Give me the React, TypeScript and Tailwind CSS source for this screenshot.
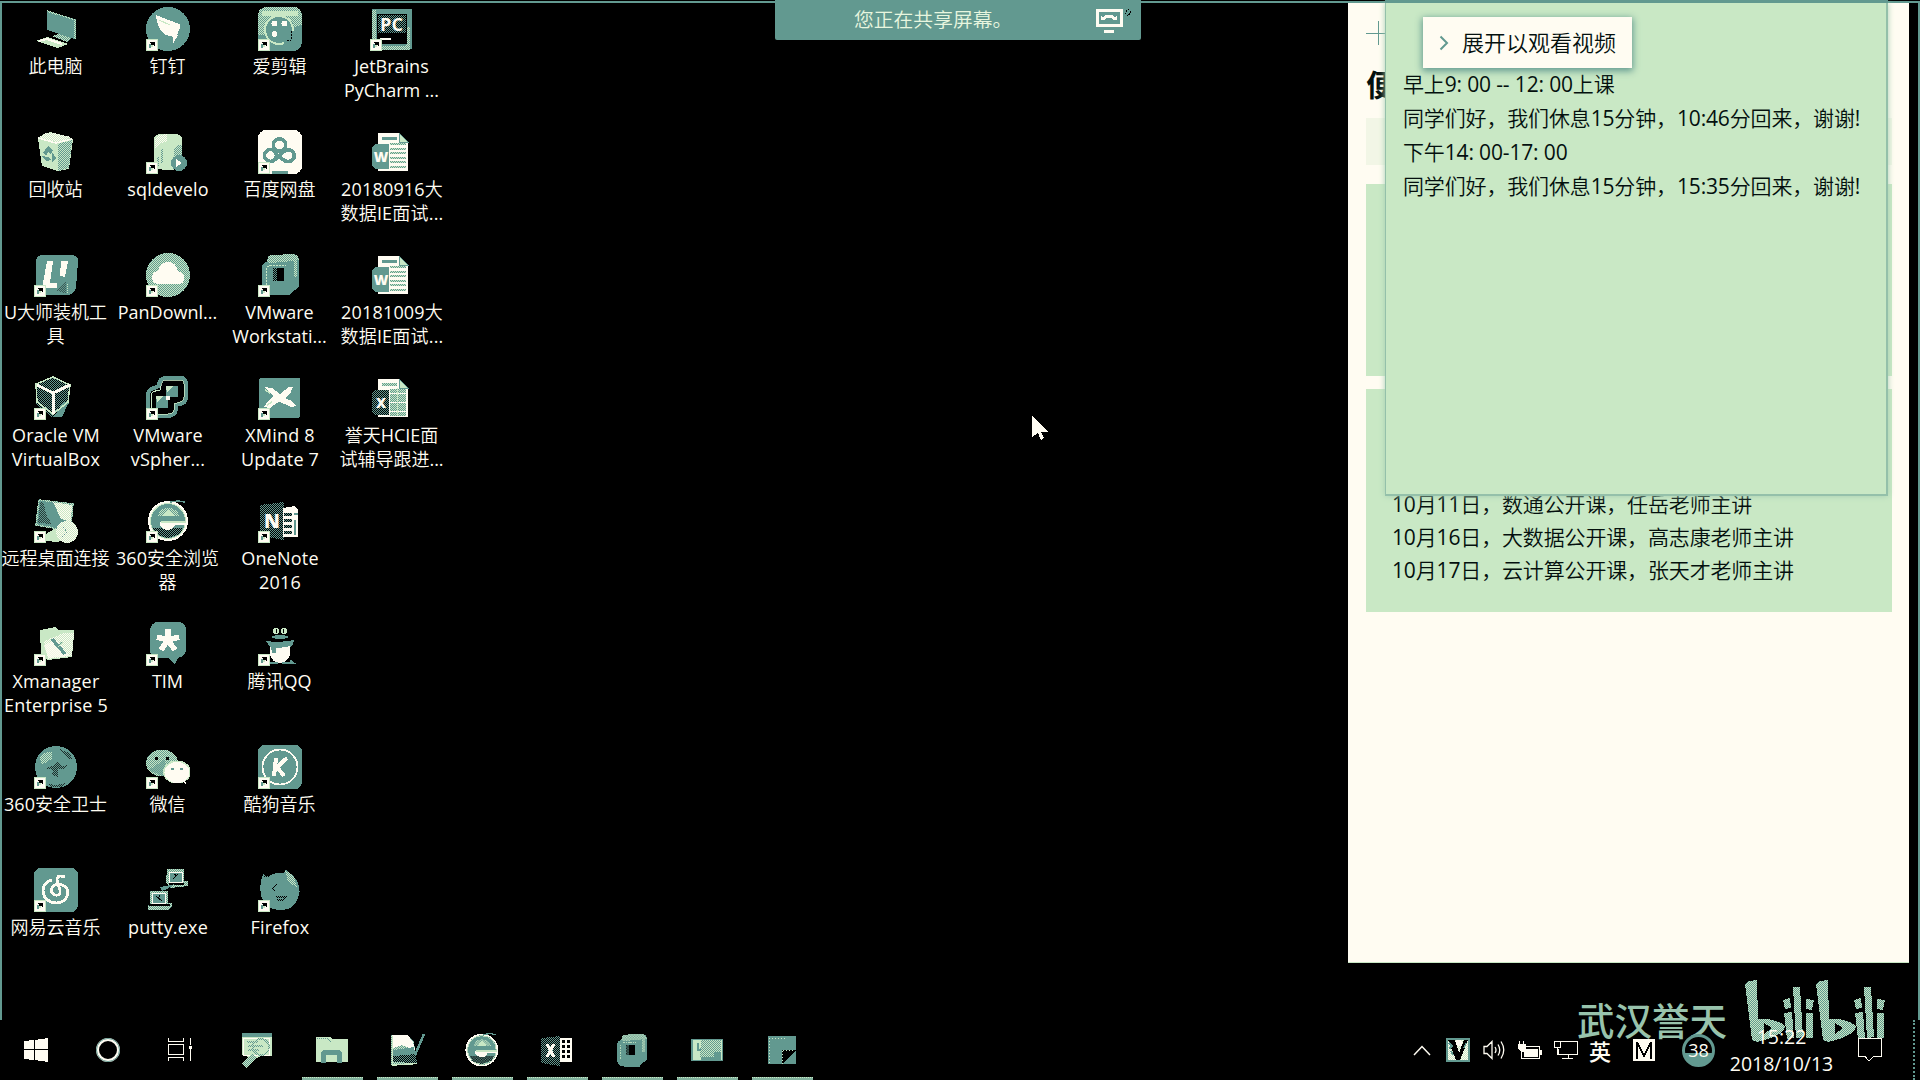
import React from "react";

const T = "#629990";
const G = "#c9e8c5";
const C = "#fffcf2";
const K = "#000000";
const TG = "url(#mix-tg)";
const TK = "url(#mix-tk)";
const GC = "url(#mix-gc)";

function Patterns() {
  const mix = (id: string, a: string, b: string) => (
    <pattern id={id} width="2" height="2" patternUnits="userSpaceOnUse">
      <rect width="2" height="2" fill={a} />
      <rect width="1" height="1" fill={b} />
      <rect x="1" y="1" width="1" height="1" fill={b} />
    </pattern>
  );
  return (
    <svg className="absolute h-0 w-0" aria-hidden="true">
      <defs>
        {mix("mix-tg", T, G)}
        {mix("mix-tk", T, K)}
        {mix("mix-gc", G, C)}
      </defs>
    </svg>
  );
}

function Badge() {
  return (
    <g>
      <rect y="32" width="12" height="12" fill={C} />
      <rect x="0.5" y="32.5" width="11" height="11" fill="none" stroke={G} />
      <path d="M4 41 V38 L7.5 36" stroke={T} strokeWidth="2" fill="none" />
      <path d="M4 35 H9 V40 L7 38 L5 40 V37 Z" fill={K} />
      <rect x="5" y="38" width="2" height="2" fill={G} />
    </g>
  );
}

function Doc({ letter, sheet }: { letter: string; sheet?: boolean }) {
  return (
    <g>
      <path d="M8 3 H29 L38 12 V41 H8 Z" fill={C} />
      <path d="M29 3 L38 12 H29 Z" fill={G} stroke={T} strokeWidth="1" />
      <rect x="12" y="7" width="15" height="3" fill={sheet ? TG : T} />
      {[13, 18, 22, 27, 31, 36].map((y) => (
        <rect key={y} x="20" y={y} width="16" height={sheet ? 4 : 2} fill={TG} />
      ))}
      {sheet && <path d="M27.500 12 V40" stroke={G} />}
      <path d="M2 17 L5 14 H19 V39 H5 L2 36 Z" fill={sheet ? TK : T} />
      <text x="11" y="32" textAnchor="middle" fontFamily="Open Sans, sans-serif" fontWeight="800" fontSize="14" fill={C}>
        {letter}
      </text>
    </g>
  );
}

function VmSquares() {
  return (
    <g>
      <path d="M10 4 Q11 2 15 2 L34 1 Q41 1 41 8 V32 Q41 36 36 37 L32 42 H14 Q4 42 4 34 V14 Q4 10 9 9 Z" fill={T} />
      <path d="M10 4 Q11 2 15 2 L34 1 Q40 1 41 7 L36 8 L12 10 L9 9 Z" fill={TG} />
      <path d="M8 32 V18 Q8 13 13 12 H28" fill="none" stroke={G} strokeWidth="1" strokeDasharray="2 1" />
      <path d="M37 6 V24" stroke={TG} strokeWidth="3" />
      <rect x="15" y="15" width="11" height="13" fill={K} />
      <rect x="15" y="15" width="4" height="13" fill={TK} />
    </g>
  );
}

function BrowserE() {
  return (
    <g>
      <circle cx="22" cy="22" r="19" fill={T} stroke={C} strokeWidth="2" />
      <circle cx="22" cy="22" r="17.500" fill="none" stroke={G} strokeWidth="1" />
      <path d="M7 29 H37 L34 35 L22 39 L11 36 Z" fill={TK} />
      <path d="M12 17 Q14 9 22 9 Q31 9 33 17 Z" fill={TG} />
      <path d="M17 17 L22 10 L28 17 Z" fill={G} />
      <path d="M14 23 H40 V26 H29 Q27 31 21 31 Q16 30 14 26 Z" fill={C} />
      <path d="M15 23 H40" stroke={G} strokeWidth="2" />
      <path d="M24 3 L32 2 L39 3" stroke={T} fill="none" strokeWidth="1.500" />
    </g>
  );
}

const drawings: Record<string, React.ReactNode> = {
  pc: (
    <g>
      <path d="M13 4 L41 13 V32 L13 23 Z" fill={T} />
      <path d="M13 4 L41 13 V32" fill="none" stroke={TG} strokeWidth="1.500" />
      <path d="M18 29 L25 27 L37 31 L33 35 Z" fill={TG} />
      <path d="M2 34 L13 30 L34 37 L24 41 Z" fill={G} />
      <path d="M5 34 L13 32 L28 37" stroke={C} strokeWidth="2" fill="none" />
    </g>
  ),
  ding: (
    <g>
      <circle cx="22" cy="22" r="22" fill={T} />
      <path d="M10 8 L33 17 Q35 18 34 21 L31 28 H32 L27 37 V31 L25 29 Q19 29 17 25 Q11 21 10 8 Z" fill={C} />
      <path d="M13 13 L24 18" stroke={G} fill="none" />
    </g>
  ),
  film: (
    <g>
      <rect width="44" height="44" rx="9" fill={T} />
      <path d="M0 14 V9 Q0 0 9 0 H35 Q44 0 44 9 V18 L36 20 Q32 7 20 10 Q8 12 8 28 H0 Z" fill={TG} />
      <path d="M4 4 H40 V9 H4 Z" fill={G} />
      <circle cx="21" cy="23" r="14" fill={T} stroke={G} strokeWidth="2" />
      <circle cx="16.500" cy="16.500" r="3" fill={C} />
      <circle cx="26.500" cy="16.500" r="3" fill={C} />
      <circle cx="16.500" cy="27" r="3" fill={C} />
      <path d="M24 28 Q28 23 36 24 V42 H28 Z" fill={T} />
      <path d="M33 24 V33 M29 33 H33" stroke={K} strokeDasharray="2 1" />
    </g>
  ),
  pycharm: (
    <g>
      <rect x="2" y="2" width="40" height="40" fill={T} />
      <path d="M4 3 V41 H40" stroke={TG} strokeWidth="4" fill="none" />
      <path d="M38 20 V40" stroke={TG} strokeWidth="4" />
      <rect x="7" y="7" width="30" height="30" fill={K} />
      <rect x="8" y="8" width="28" height="18" fill={TK} />
      <text x="21.500" y="24" textAnchor="middle" fontFamily="Open Sans, sans-serif" fontWeight="700" fontSize="18" fill={C}>
        PC
      </text>
      <rect x="10" y="31" width="11" height="2" fill={C} />
    </g>
  ),
  bin: (
    <g>
      <path d="M4 8 L16 2 L39 9 L35 39 L24 41 L8 36 Z" fill={G} />
      <path d="M24 14 L38 10 L35 38 L24 41 Z" fill={TG} />
      <path d="M5 7 L12 3 L20 3 L28 5 L37 7 L28 12 L12 11 Z" fill={GC} />
      <path d="M4 8 L22 13 L38 9" stroke={C} strokeWidth="1.500" fill="none" />
      <path d="M9 23 L14 16 L19 20 L17 24 L14 22 L12 26 Z M8 26 L12 31 L17 30 L14 27 Z M18 22 L22 28 L18 32 Z" fill={T} />
    </g>
  ),
  sql: (
    <g>
      <path d="M8 10 Q8 4 16 4 H29 Q36 4 36 10 V36 Q33 40 22 40 Q12 40 8 36 Z" fill={G} />
      <path d="M9 8 Q14 4 21 4 V12 Q12 12 9 20 Z" fill={GC} />
      <path d="M16 19 V33 M29 18 V28 M12 27 V36" stroke={TG} strokeWidth="2" />
      <path d="M31 15 H36 V30 H28 Z" fill={TG} />
      <circle cx="33" cy="33" r="8" fill={T} />
      <path d="M30 29 L36 33 L30 37 Z" fill={C} />
    </g>
  ),
  baidu: (
    <g>
      <rect width="44" height="44" rx="8" fill={C} />
      <g fill="none" stroke={T} strokeWidth="3.600">
        <circle cx="21.500" cy="15" r="6.200" />
        <circle cx="12.500" cy="25.500" r="6" />
        <path d="M17 29.500 L26 21.500 Q31 18 35 22 Q38 27 34 30.500 Q29 33 25 29.500 L22 27" />
      </g>
      <rect x="14" y="41" width="16" height="3" fill={T} />
    </g>
  ),
  word: <Doc letter="W" />,
  excelDoc: <Doc letter="X" sheet />,
  udashi: (
    <g>
      <path d="M7 2 H39 Q44 3 44 8 L42 35 Q40 41 34 42 H8 Q2 40 2 34 V8 Q3 3 7 2 Z" fill={T} />
      <path d="M13 8 H19 L16 30 H23 V35 H12 Q8 35 9 30 Z" fill={C} />
      <path d="M27 8 H34 L31 24 L26 23 Z" fill={C} />
      <path d="M27 24 L33 30 V40" stroke={TG} fill="none" />
      <path d="M22 37 L32 29 V41 Z" fill={TK} opacity="0.400" />
    </g>
  ),
  pan: (
    <g>
      <circle cx="22" cy="22" r="22" fill={TG} />
      <path d="M11 31 Q6 30 6 24 Q6 19 12 18 Q14 9 22 9 Q30 9 32 18 Q38 20 38 25 Q38 30 34 31 Z" fill={C} />
    </g>
  ),
  vmware: <VmSquares />,
  vbox: (
    <g>
      <path d="M19 1 L36 9 L35 27 L27 41 L17 41 L2 28 V8 Z" fill={TK} />
      <path d="M29 26 L35 26 L28 41 L20 41 Z" fill={T} />
      <path d="M19 1 L36 9 L34 26 L19 38 L3 26 L2 8 Z" fill="none" stroke={G} strokeWidth="1.500" />
      <path d="M3 9 L19 17 L36 9 M19 17 V38" fill="none" stroke={C} strokeWidth="3" />
      <path d="M8 9 L19 3 L30 9 L19 14 Z" fill={TK} />
    </g>
  ),
  vsphere: (
    <g fill="none">
      <path d="M13 10 Q13 2 20 2 H34 Q40 2 40 8 V21 Q40 27 34 28 L30 29 V34 Q28 40 22 40 H8 Q2 40 2 34 V20 Q2 13 8 12 Z" stroke={T} strokeWidth="4" />
      <path d="M15 10 Q15 4 20 4 H34 Q38 4 38 8 V21 Q38 25 34 26 L28 28 V34 Q27 38 22 38 H8" stroke={G} strokeWidth="0.800" />
      <path d="M5 32 V20 Q5 15 14 14 V10" stroke={G} strokeWidth="1" />
      <rect x="20" y="10" width="12" height="11" fill={T} />
      <rect x="10" y="20" width="12" height="12" fill={T} />
      <path d="M20 10 H27 L21 17 Z M10 20 H17 L11 26 Z" fill={G} />
      <rect x="20" y="20" width="4" height="4" fill={C} />
    </g>
  ),
  xmind: (
    <g>
      <rect x="1" y="2" width="41" height="40" rx="2" fill={T} />
      <path d="M6 11 L14 12 L22 18 L31 11 H35 L32 18 L27 22 L34 25 L38 30 L33 31 L21 25.500 L12 32 L6 31 L10 25 L15 20 Z" fill={C} />
      <path d="M7 14 L12 17 M9 29 L14 26" stroke={G} strokeWidth="1.500" />
    </g>
  ),
  remote: (
    <g>
      <path d="M5 1 L39 5 L37 26 L22 30 L2 25 Z" fill={T} />
      <path d="M19 3 L38 6 L37 23 L27 20 Z" fill={GC} />
      <path d="M6 3 L10 4 L12 15 L18 25 L4 24 Z" fill={TK} opacity="0.600" />
      <path d="M5 1 L39 5 L37 26 M5 1 L2 26 L20 29" stroke={TG} fill="none" strokeWidth="1.500" />
      <path d="M12 35 L22 29 L30 40 L24 43 L12 42 Z" fill={G} />
      <circle cx="33" cy="33" r="11" fill={GC} />
      <path d="M29 28 L33 33 L28 38" stroke={T} fill="none" strokeDasharray="2 1" />
    </g>
  ),
  e360: <BrowserE />,
  onenote: (
    <g>
      <path d="M2 6 L26 3 V41 L2 37 Z" fill={TK} />
      <path d="M25 9 L37 7 L40 11 V38 H25 Z" fill={C} />
      <path d="M26 15 H34 M26 21 H34 M26 27 H34 M26 33 H34" stroke={TK} strokeWidth="3" />
      <path d="M36 15 H40 M37 21 V36" stroke={T} strokeWidth="2" />
      <text x="14" y="29" textAnchor="middle" fontFamily="Open Sans, sans-serif" fontWeight="800" fontSize="19" fill={C}>
        N
      </text>
    </g>
  ),
  xmanager: (
    <g>
      <path d="M6 8 L21 5 L25 8 L40 8 V13 L38 35 L14 38 L7 34 Z" fill={G} />
      <path d="M10 19 L30 11 L40 11 L38 34 L14 37 Z" fill={GC} />
      <path d="M10 23 L22 18 L36 34 L14 36 Z" fill={C} opacity="0.700" />
      <path d="M18 17 L31 32" stroke={T} strokeWidth="3.500" />
      <path d="M28 20 L24 25" stroke={TG} strokeWidth="2" />
    </g>
  ),
  tim: (
    <g>
      <path d="M11 0 H33 Q40 1 40 8 V29 Q39 34 32 36 L29 42 L22 36 H12 Q4 34 4 28 V8 Q5 1 11 0 Z" fill={T} />
      <path d="M22 18 V7 M22 18 L33 15 M22 18 L29 28 M22 18 L15 28 M22 18 L11 15" stroke={C} strokeWidth="5.500" />
    </g>
  ),
  qq: (
    <g>
      <circle cx="18" cy="9" r="3.200" fill={G} />
      <circle cx="26" cy="9" r="3.200" fill={G} />
      <path d="M18.500 7 V10.500 M25.500 7 V10.500" stroke={K} strokeWidth="1.800" />
      <ellipse cx="22" cy="15" rx="8" ry="2" fill={T} />
      <path d="M8 19 Q22 21 36 18 L35 23 L32 25 Q22 27 12 25 Z" fill={T} />
      <path d="M12 25 Q22 27 32 24 V33 Q30 40 22 41 Q14 40 12 33 Z" fill={C} />
      <path d="M13 25 H18 V31 H14 Z" fill={T} />
      <path d="M12 41 H20 M24 41 H35 L32 39" stroke={T} strokeWidth="2.500" fill="none" />
    </g>
  ),
  guard: (
    <g>
      <circle cx="22" cy="22" r="21" fill={T} />
      <path d="M6 13 Q10 6 18 7 V14 L8 20 Z" fill={TG} />
      <path d="M26 4 L35 8 L39 14 L34 14 Z M20 20 L23 16 L28 21 L33 20 L30 24 L24 24 V32 L18 30 L19 25 L11 23 Z M12 38 Q24 42 34 37 L28 42 L18 42 Z" fill={TK} opacity="0.700" />
    </g>
  ),
  wechat: (
    <g>
      <ellipse cx="16" cy="18" rx="16" ry="13.500" fill={TG} />
      <path d="M3 25 L16 31 L24 28 L18 15 Z" fill={T} opacity="0.600" />
      <path d="M9 13 H12 M20 13 H23" stroke={K} strokeWidth="3" />
      <ellipse cx="31" cy="27" rx="14" ry="11.500" fill={G} />
      <ellipse cx="31" cy="27.500" rx="12.500" ry="10.500" fill={C} />
      <path d="M35 35 L40 39 L39 34 Z" fill={C} />
      <path d="M25 24 H28 M34 24 H37" stroke={T} strokeWidth="2.500" />
    </g>
  ),
  kugou: (
    <g>
      <rect width="44" height="44" rx="7" fill={T} />
      <circle cx="22" cy="22" r="17.500" fill="none" stroke={C} strokeWidth="1.800" />
      <path d="M18 13 L16 31 M29 13 L19 22 L26 31" stroke={C} strokeWidth="4" fill="none" />
    </g>
  ),
  netease: (
    <g>
      <rect width="44" height="44" rx="7" fill={T} />
      <path d="M31 9 Q23 6 23 12 L26 22 Q27 28 21 27 Q16 25 18 20 Q20 16 25 16 Q34 18 34 25 Q32 35 22 35 Q10 34 9 23 Q9 14 18 12" fill="none" stroke={C} strokeWidth="2.800" />
    </g>
  ),
  putty: (
    <g>
      <path d="M21 1 H38 V13 H42 V18 L24 20 L20 14 Z" fill={TG} />
      <rect x="23" y="4" width="13" height="10" fill={T} stroke={C} />
      <path d="M23 16 H38" stroke={K} strokeWidth="1.500" />
      <path d="M14 19 L29 16 L21 21 L16 23 Z" fill={T} />
      <path d="M4 23 H22 V35 H26 V38 L22 42 H2 V38 L4 35 Z" fill={TG} />
      <rect x="6" y="25" width="13" height="10" fill={T} stroke={C} />
      <path d="M3 37 H24" stroke={K} strokeWidth="1.500" />
      <path d="M27 11 L32 6 M28 6 L31 8 M10 28 L16 33 M14 27 L12 31" stroke={K} />
    </g>
  ),
  firefox: (
    <g>
      <path d="M5 6 L10 9 Q16 4 26 5 L28 2 L38 11 Q43 20 41 27 Q37 42 23 42 Q7 42 3 27 Q1 17 5 6 Z" fill={T} />
      <path d="M27 2 L36 8 L39 19 L30 14 Z" fill={TG} />
      <path d="M18 16 L15 21 L17 23 M18 29 H28 L24 32 H19 M6 8 L11 9" stroke={TK} strokeWidth="1.500" fill="none" />
    </g>
  ),
};

type Entry = { icon: string; lines: string[]; plain?: boolean; spaced?: boolean };

const columns: Entry[][] = [
  [
    { icon: "pc", lines: ["此电脑"], plain: true },
    { icon: "bin", lines: ["回收站"], plain: true },
    { icon: "udashi", lines: ["U大师装机工", "具"] },
    { icon: "vbox", lines: ["Oracle VM", "VirtualBox"], spaced: true },
    { icon: "remote", lines: ["远程桌面连接"] },
    { icon: "xmanager", lines: ["Xmanager", "Enterprise 5"], spaced: true },
    { icon: "guard", lines: ["360安全卫士"] },
    { icon: "netease", lines: ["网易云音乐"] },
  ],
  [
    { icon: "ding", lines: ["钉钉"] },
    { icon: "sql", lines: ["sqldevelo"], spaced: true },
    { icon: "pan", lines: ["PanDownl..."] },
    { icon: "vsphere", lines: ["VMware", "vSpher..."], spaced: true },
    { icon: "e360", lines: ["360安全浏览", "器"] },
    { icon: "tim", lines: ["TIM"] },
    { icon: "wechat", lines: ["微信"] },
    { icon: "putty", lines: ["putty.exe"], plain: true, spaced: true },
  ],
  [
    { icon: "film", lines: ["爱剪辑"] },
    { icon: "baidu", lines: ["百度网盘"] },
    { icon: "vmware", lines: ["VMware", "Workstati..."] },
    { icon: "xmind", lines: ["XMind 8", "Update 7"], spaced: true },
    { icon: "onenote", lines: ["OneNote", "2016"], spaced: true },
    { icon: "qq", lines: ["腾讯QQ"] },
    { icon: "kugou", lines: ["酷狗音乐"] },
    { icon: "firefox", lines: ["Firefox"], spaced: true },
  ],
  [
    { icon: "pycharm", lines: ["JetBrains", "PyCharm ..."] },
    { icon: "word", lines: ["20180916大", "数据IE面试..."], plain: true, spaced: true },
    { icon: "word", lines: ["20181009大", "数据IE面试..."], plain: true, spaced: true },
    { icon: "excelDoc", lines: ["誉天HCIE面", "试辅导跟进..."], plain: true },
  ],
];

function DesktopIcon({ icon, lines, plain, spaced }: Entry) {
  return (
    <div className="flex h-[123px] w-28 flex-col items-center pt-[7px]">
      <svg width="44" height="44" viewBox="0 0 44 44" shapeRendering="crispEdges" className="shrink-0">
        {drawings[icon]}
        {!plain && <Badge />}
      </svg>
      <div
        className={
          spaced
            ? "mt-[3px] text-center text-[18px] leading-6 tracking-[0.2px] whitespace-nowrap"
            : "mt-[3px] mr-px text-center text-[18px] leading-6 whitespace-nowrap"
        }
      >
        {lines.map((l) => (
          <div key={l}>{l}</div>
        ))}
      </div>
    </div>
  );
}

function ShareBanner() {
  return (
    <div className="absolute top-0 left-[775px] flex h-10 w-[366px] items-center rounded-b-[2px] bg-[#629990] pl-[79px]">
      <span className="text-[19.800px] font-light whitespace-nowrap text-[#e8f6df]">您正在共享屏幕。</span>
      <svg width="40" height="28" viewBox="0 0 40 28" className="mt-[2px] mr-[6px] ml-auto" shapeRendering="crispEdges">
        <rect x="2" y="3" width="24" height="15" fill="none" stroke={C} strokeWidth="3" />
        <path d="M8 12 Q14 6 20 12" fill="none" stroke={C} strokeWidth="3" />
        <path d="M6 8 V13 H10 Z M22 8 V13 H18 Z" fill={C} />
        <rect x="9" y="23" width="10" height="3" fill={C} />
        <path d="M33 2 L36 5 L33 9 L30 6 Z" fill="none" stroke={K} strokeDasharray="2 1" />
      </svg>
    </div>
  );
}

function NotesList() {
  return (
    <div className="absolute top-[3px] left-[1348px] flex h-[960px] w-[561px] flex-col border-b border-[#c9e8c5] bg-[#fffcf2] pl-[18px] text-[#04100e]">
      <svg width="24" height="24" viewBox="0 0 24 24" className="mt-[18px]" shapeRendering="crispEdges">
        <path d="M12 0 V24 M0 12 H24" stroke={T} strokeWidth="1" />
      </svg>
      <div className="mt-[17px] h-[47px] font-['Noto_Sans_CJK_SC',sans-serif] text-[30px] leading-[42px] font-bold whitespace-nowrap">
        便
      </div>
      <div className="mt-[9px] h-[47px] w-[526px] bg-[#f2f6e6]" />
      <div className="mt-[19px] h-[192px] w-[526px] bg-[#c9e8c5]" />
      <div className="mt-[13px] flex h-[223px] w-[526px] flex-col justify-end bg-[#c9e8c5] pb-[25px] pl-[26px] text-[21px] leading-[33px] tracking-[-0.150px] whitespace-nowrap">
        <div>10月11日，数通公开课，任岳老师主讲</div>
        <div>10月16日，大数据公开课，高志康老师主讲</div>
        <div>10月17日，云计算公开课，张天才老师主讲</div>
      </div>
    </div>
  );
}

function StickyNote() {
  return (
    <div className="absolute top-[3px] left-[1385px] h-[493px] w-[503px] border-r-2 border-b-2 border-l border-[#94c0aa] bg-[#c9e8c5] pt-[64px] pl-[17px] text-[21px] leading-[34px] tracking-[-0.150px] whitespace-nowrap text-[#04100e] shadow-[0_0_6px_#a5cdb2]">
      <div>早上9: 00 -- 12: 00上课</div>
      <div>同学们好，我们休息15分钟，10:46分回来，谢谢!</div>
      <div>下午14: 00-17: 00</div>
      <div>同学们好，我们休息15分钟，15:35分回来，谢谢!</div>
    </div>
  );
}

function ExpandVideo() {
  return (
    <div className="absolute top-[17px] left-[1423px] flex h-[51px] w-[209px] items-center bg-[#fffcf2] pl-[16px] text-[22px] text-[#04100e] shadow-[0_2px_7px_1px_#629990]">
      <svg width="10" height="16" viewBox="0 0 10 16" className="mr-[13px]">
        <path d="M1.500 1.500 L8 8 L1.500 14.500" fill="none" stroke={T} strokeWidth="2" />
      </svg>
      <span className="whitespace-nowrap">展开以观看视频</span>
    </div>
  );
}

const running: { name: string; art: React.ReactNode }[] = [
  {
    name: "folder",
    art: (
      <g>
        <path d="M1 4 H15 L17 6 H33 V29 H1 Z" fill={G} />
        <path d="M2 6 L12 5 L16 9" stroke={TG} fill="none" />
        <path d="M6 30 V21 Q6 17 10 17 H23 Q27 17 27 21 V30 H22 V22 H11 V30 Z" fill={T} />
      </g>
    ),
  },
  {
    name: "editor",
    art: (
      <g>
        <path d="M1 2 H18 L24 9 L27 31 L1 32 Z" fill={TG} />
        <path d="M2 2 H18 L23 9 L25 17 L12 12 L3 15 Z" fill={C} />
        <path d="M3 17 L24 14 L27 30 L3 29 Z" fill={T} />
        <path d="M3 23 L26 21 L27 30 L3 29 Z" fill={TK} />
        <path d="M2.500 3 V32 L27 30.500" stroke={G} fill="none" strokeWidth="1.500" />
        <path d="M34 1 L25 22" stroke={T} strokeWidth="2.500" />
      </g>
    ),
  },
  {
    name: "browser",
    art: (
      <g transform="translate(-1.200 -1) scale(0.820)">
        <BrowserE />
      </g>
    ),
  },
  {
    name: "excel",
    art: (
      <g>
        <path d="M1 5 L20 3 V33 L1 30 Z" fill={TK} />
        <path d="M20 5 H32 V29 H20" fill={C} />
        <path d="M22 8 H30 M22 13 H30 M22 18 H30 M22 23 H30" stroke={K} strokeWidth="3" />
        <path d="M26 6 V28" stroke={C} strokeWidth="1.500" />
        <path d="M7 11 L14 24 M14 11 L7 24" stroke={C} strokeWidth="3" />
      </g>
    ),
  },
  {
    name: "vm",
    art: (
      <g transform="translate(-1 0) scale(0.800)">
        <VmSquares />
      </g>
    ),
  },
  {
    name: "card",
    art: (
      <g>
        <rect x="1" y="6" width="32" height="22" fill={T} />
        <path d="M3 7 H14 L11 27 H3 Z" fill={G} />
        <path d="M11 7 H31 V19 H24 V24 H10 Z" fill={TG} />
        <path d="M8 10 V17 H11" stroke={T} strokeWidth="1.500" fill="none" />
        <path d="M31 7 V27" stroke={G} />
      </g>
    ),
  },
  {
    name: "sticky",
    art: (
      <g>
        <path d="M3 3 H31 V31 H3 Z" fill={T} />
        <path d="M17 17 H31 L17 31 Z" fill={K} />
        <path d="M4.500 30 V5.500 H20 M17 31 V17 H29" stroke={G} strokeDasharray="1 2" fill="none" />
      </g>
    ),
  },
];

function Taskbar() {
  return (
    <div className="absolute bottom-0 left-0 flex h-[60px] w-full items-stretch">
      <div className="flex w-[302px] items-center">
        <div className="flex w-[72px] justify-center">
          <svg width="24" height="24" viewBox="0 0 24 24" shapeRendering="crispEdges" fill={C}>
            <path d="M0 3 L10 2 V11 H0 Z M11 2 L24 0 V11 H11 Z M0 12 H10 V22 L0 21 Z M11 12 H24 V24 L11 22 Z" />
          </svg>
        </div>
        <div className="flex w-[72px] justify-center">
          <div className="size-6 rounded-full border-[3px] border-[#fffcf2] outline-1 -outline-offset-1 outline-[#629990]" />
        </div>
        <div className="flex w-[72px] justify-center">
          <svg width="24" height="24" viewBox="0 0 24 24" shapeRendering="crispEdges" fill="none" stroke={C}>
            <path d="M0.500 0 V3.500 H15.500 V0 M0.500 6.500 H15.500 V16.500 H0.500 Z M0.500 23 V19.500 H15.500 V23 M22.500 0 V7 M22.500 11 V23" />
            <rect x="21" y="7.500" width="3" height="3" fill={C} stroke="none" />
          </svg>
        </div>
        <div className="flex w-[82px] justify-center">
          <svg width="32" height="36" viewBox="0 0 32 36" shapeRendering="crispEdges">
            <path d="M1 1 H31 V6 H1 Z" fill={T} />
            <path d="M1 5 H31 V24 H20 L14 27 L1 23 Z" fill={G} />
            <path d="M2.500 6.500 H28.500 V23 H3 Z" stroke={C} fill="none" />
            <circle cx="20" cy="15" r="8" fill={G} stroke={TG} strokeWidth="2" />
            <path d="M6 10 H17 M7 14 H22 M7 18 H18" stroke={TG} strokeWidth="1.500" />
            <path d="M13 24 L3 34" stroke={TG} strokeWidth="6" />
          </svg>
        </div>
      </div>
      <div className="flex gap-[14px]">
        {running.map((r) => (
          <div key={r.name} className="flex w-[61px] flex-col items-center justify-between pt-[13px]">
            <svg width="34" height="34" viewBox="0 0 34 34" shapeRendering="crispEdges" className="mr-px overflow-visible">
              {r.art}
            </svg>
            <div className="h-[3px] w-full border-t border-dotted border-[#c9e8c5] bg-[#83b39f]" />
          </div>
        ))}
      </div>
      <Tray />
    </div>
  );
}

function Tray() {
  return (
    <div className="ml-auto flex w-[507px] items-center">
      <svg width="18" height="11" viewBox="0 0 18 11" fill="none" stroke={C} strokeWidth="1.500">
        <path d="M1 10 L9 1.500 L17 10" />
      </svg>
      <svg width="24" height="24" viewBox="0 0 24 24" className="ml-[15px]" shapeRendering="crispEdges">
        <rect width="24" height="24" fill={T} />
        <rect x="2" y="2" width="20" height="20" fill={GC} />
        <path d="M2 2 H9 L13 15 L18 2 H22 L14 22 H10 Z" fill={K} />
        <path d="M3 5 L6 8 L3 11 M20 5 L18 10 M5 13 L7 17" stroke={T} strokeWidth="1.500" fill="none" />
        <circle cx="13" cy="5" r="3" fill={C} />
      </svg>
      <svg width="22" height="20" viewBox="0 0 22 20" className="ml-[13px]" fill="none" stroke={C} strokeWidth="1.300">
        <path d="M1 6.500 H4 L9 1.500 V18.500 L4 13.500 H1 Z M12 7 Q14 10 12 13 M15 4.500 Q18.500 10 15 15.500 M18 1.500 Q23.500 10 18 18.500" />
      </svg>
      <svg width="24" height="19" viewBox="0 0 24 19" className="ml-[13px]" shapeRendering="crispEdges">
        <rect x="3.500" y="5.500" width="18" height="12" fill="none" stroke={C} />
        <rect x="6" y="8" width="14" height="8" fill={C} />
        <rect x="22" y="9" width="2" height="5" fill={C} />
        <path d="M0 3 H8 V8 L5 11 H3 L0 8 Z M1 0 H2 V3 H1 Z M5 0 H6 V3 H5 Z" fill={C} />
      </svg>
      <svg width="24" height="20" viewBox="0 0 24 20" className="ml-[12px]" shapeRendering="crispEdges" fill="none" stroke={C}>
        <path d="M7 1.500 H23.500 V14.500 H4.500 V9 M14 15 V18.500 M8 18.500 H19" />
        <path d="M0.500 1.500 H6.500 V7.500 H0.500 Z M3.500 8 V15" />
      </svg>
      <span className="ml-[11px] font-['Noto_Sans_CJK_SC',sans-serif] text-[22px] leading-7 font-medium">英</span>
      <svg width="22" height="22" viewBox="0 0 22 22" className="ml-[22px]" shapeRendering="crispEdges">
        <rect width="22" height="22" fill={C} />
        <path d="M4 20 V3 L11 17 L18 3 V20" fill="none" stroke={K} strokeWidth="1.800" />
      </svg>
      <div className="ml-[27px] flex size-[33px] items-center justify-center rounded-full border-[3px] border-[#629990] bg-[linear-gradient(to_bottom,#000_60%,#629990_60%)] text-[18px] leading-none">
        38
      </div>
      <div className="ml-[14px] flex w-[105px] flex-col items-center text-[19.500px] leading-[27px] whitespace-nowrap">
        <span>15:22</span>
        <span>2018/10/13</span>
      </div>
      <svg width="24" height="24" viewBox="0 0 24 24" className="ml-[24px]" shapeRendering="crispEdges" fill="none" stroke={C}>
        <path d="M0.500 0.500 H23.500 V18.500 H15.500 L11 23 L7 18.500 H0.500 Z" />
      </svg>
      <div className="ml-[31px] h-full border-l-2 border-dotted border-[#629990]" />
    </div>
  );
}

function BLetter() {
  return (
    <g>
      <path d="M5 8 L9 5 L17 4 L18 43 Q36 42 45 50 Q44 60 17 66 L12 64 Z" fill={TG} />
      <path d="M24 47 L32 52 L24 58 Z" fill={K} />
    </g>
  );
}

function Strokes() {
  return (
    <g fill={TG}>
      <path d="M43 24 L50 22 L51 32 L45 33 Z M44 37 L52 36 L54 62 L47 63 Z" />
      <path d="M53 11 H60 L63 61 L56 62 Z" />
      <path d="M66 23 L74 24 L72 34 L66 33 Z M66 37 H73 L73 62 H66 Z" />
    </g>
  );
}

function Watermark() {
  return (
    <>
      <div className="absolute top-[993px] left-[1577px] font-['Noto_Sans_CJK_SC',sans-serif] text-[37.500px] leading-[52px] font-medium whitespace-nowrap text-[#98c3ac]">
        武汉誉天
      </div>
      <svg width="150" height="70" viewBox="0 0 150 70" className="absolute top-[976px] left-[1740px]" shapeRendering="crispEdges">
        <BLetter />
        <Strokes />
        <g transform="translate(71 0)">
          <BLetter />
          <Strokes />
        </g>
      </svg>
    </>
  );
}

export default function App() {
  return (
    <div className="relative h-[1080px] w-[1920px] overflow-hidden bg-black font-['Open_Sans','Noto_Sans_CJK_SC_DemiLight','Noto_Sans_CJK_SC_Light','Noto_Sans_CJK_SC',sans-serif] text-[#fffcf2]">
      <Patterns />
      <div className="flex">
        {columns.map((col, i) => (
          <div key={i} className="flex flex-col">
            {col.map((e, j) => (
              <DesktopIcon key={j} {...e} />
            ))}
          </div>
        ))}
      </div>
      <div className="absolute top-px left-0 h-[1019px] w-full border-x-2 border-t-2 border-[#629990]" />
      <NotesList />
      <StickyNote />
      <ExpandVideo />
      <div className="absolute top-0 left-[1385px] h-[3px] w-[503px] bg-[#629990]" />
      <ShareBanner />
      <svg width="18" height="26" viewBox="0 0 18 26" className="absolute top-[415px] left-[1031px]" shapeRendering="crispEdges" fill={C}>
        <path d="M1 1 L17 17 H10 L13 23 L10 25 L7 18 L1 22 Z" />
      </svg>
      <Watermark />
      <Taskbar />
    </div>
  );
}
